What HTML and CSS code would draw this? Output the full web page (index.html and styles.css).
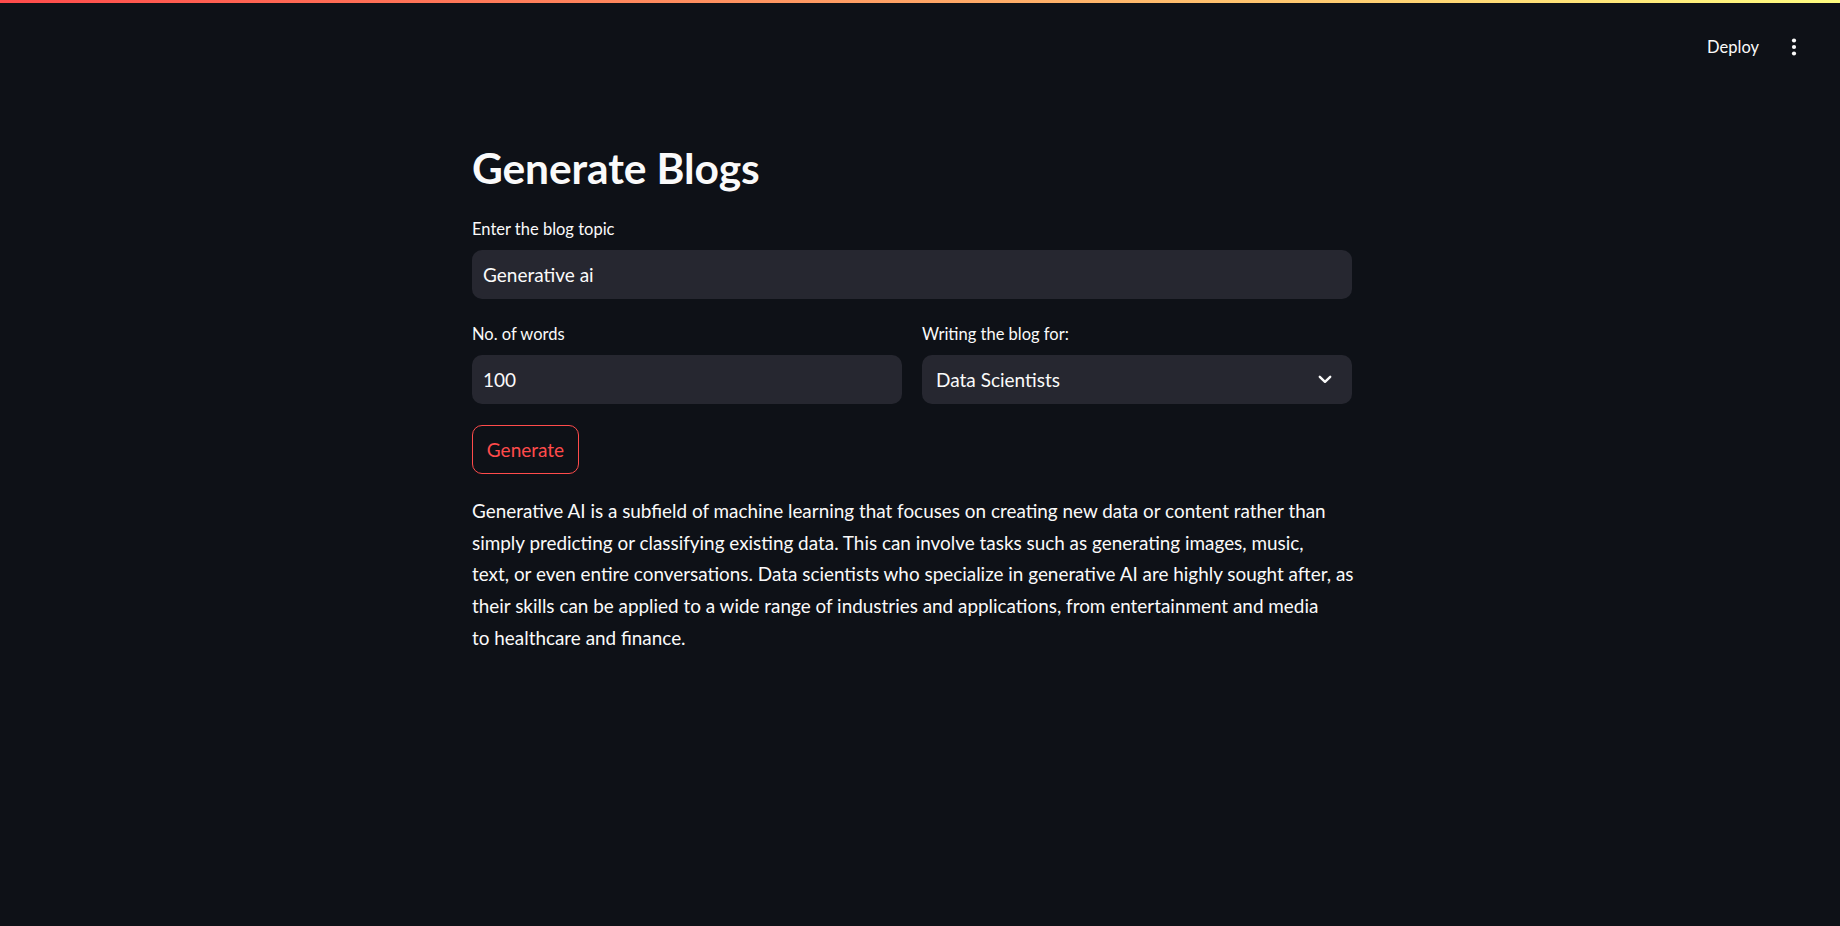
FILE: index.html
```html
<!DOCTYPE html>
<html lang="en">
<head>
<meta charset="utf-8">
<title>Generate Blogs</title>
<link rel="stylesheet" href="styles.css">
</head>
<body>
<div class="decoration"></div>
<header class="topbar">
  <span class="deploy">Deploy</span>
  <span class="menu" aria-label="Main menu">
    <svg width="24" height="24" viewBox="0 0 24 24"><circle cx="12" cy="5.5" r="2.1" fill="#fafafa"/><circle cx="12" cy="12" r="2.1" fill="#fafafa"/><circle cx="12" cy="18.5" r="2.1" fill="#fafafa"/></svg>
  </span>
</header>
<main class="main">
  <div class="block">
    <h1 class="title">Generate Blogs</h1>
    <div class="field">
      <label class="label">Enter the blog topic</label>
      <div class="input">Generative ai</div>
    </div>
    <div class="cols">
      <div class="field">
        <label class="label">No. of words</label>
        <div class="input">100</div>
      </div>
      <div class="field">
        <label class="label">Writing the blog for:</label>
        <div class="input select">
          <span>Data Scientists</span>
          <svg class="chev" width="14" height="9" viewBox="0 0 14 9"><path d="M1.8 1.8 L7 6.8 L12.2 1.8" fill="none" stroke="#fafafa" stroke-width="2.4" stroke-linecap="round" stroke-linejoin="round"/></svg>
        </div>
      </div>
    </div>
    <div class="btnrow"><button class="btn">Generate</button></div>
    <p class="text">Generative AI is a subfield of machine learning that focuses on creating new data or content rather than<br>simply predicting or classifying existing data. This can involve tasks such as generating images, music,<br>text, or even entire conversations. Data scientists who specialize in generative AI are highly sought after, as<br>their skills can be applied to a wide range of industries and applications, from entertainment and media<br>to healthcare and finance.</p>
  </div>
</main>
</body>
</html>
```
FILE: styles.css
```css
html, body {
  margin: 0;
  padding: 0;
  background: #0e1117;
  color: #fafafa;
  font-family: "Lato", "Noto Sans", sans-serif;
  height: 100%;
  overflow: hidden;
}
.decoration {
  height: 3px;
  background: linear-gradient(90deg, #ff4b4b 0%, #fffd80 100%);
}
.topbar {
  height: 88px;
  display: flex;
  justify-content: flex-end;
  align-items: center;
  padding-right: 34px;
  gap: 23px;
  box-sizing: border-box;
}
.deploy {
  font-size: 16.5px;
  line-height: 24px;
  color: #fafafa;
}
.menu {
  display: flex;
  width: 24px;
  height: 24px;
  margin-top: -1px;
}
.main {
  display: flex;
  justify-content: center;
  padding: 50px 16px 0 0;
}
.block {
  width: 880px;
  display: flex;
  flex-direction: column;
  gap: 21px;
}
.title {
  margin: 2px 0 1px 0;
  font-size: 42.5px;
  font-weight: 700;
  line-height: 50px;
  height: 50px;
  letter-spacing: -0.1px;
}
.field {
  display: flex;
  flex-direction: column;
}
.label {
  font-size: 16.5px;
  line-height: 28px;
  margin-bottom: 7px;
  color: #fafafa;
}
.input {
  height: 49px;
  background: #262730;
  border-radius: 10px;
  padding: 0 11px;
  display: flex;
  align-items: center;
  font-size: 19px;
  color: #fafafa;
}
.cols {
  display: grid;
  grid-template-columns: 1fr 1fr;
  gap: 20px;
}
.select {
  padding: 0 20px 0 14px;
  justify-content: space-between;
}
.chev {
  display: block;
}
.btnrow {
  display: flex;
}
.btn {
  height: 49px;
  width: 107px;
  border: 1px solid #ff4b4b;
  border-radius: 10px;
  background: transparent;
  color: #ff4b4b;
  font-family: "Lato", "Noto Sans", sans-serif;
  font-size: 19px;
  padding: 0;
}
.text {
  margin: 0;
  font-size: 18.9px;
  line-height: 31.7px;
  white-space: nowrap;
}
```
